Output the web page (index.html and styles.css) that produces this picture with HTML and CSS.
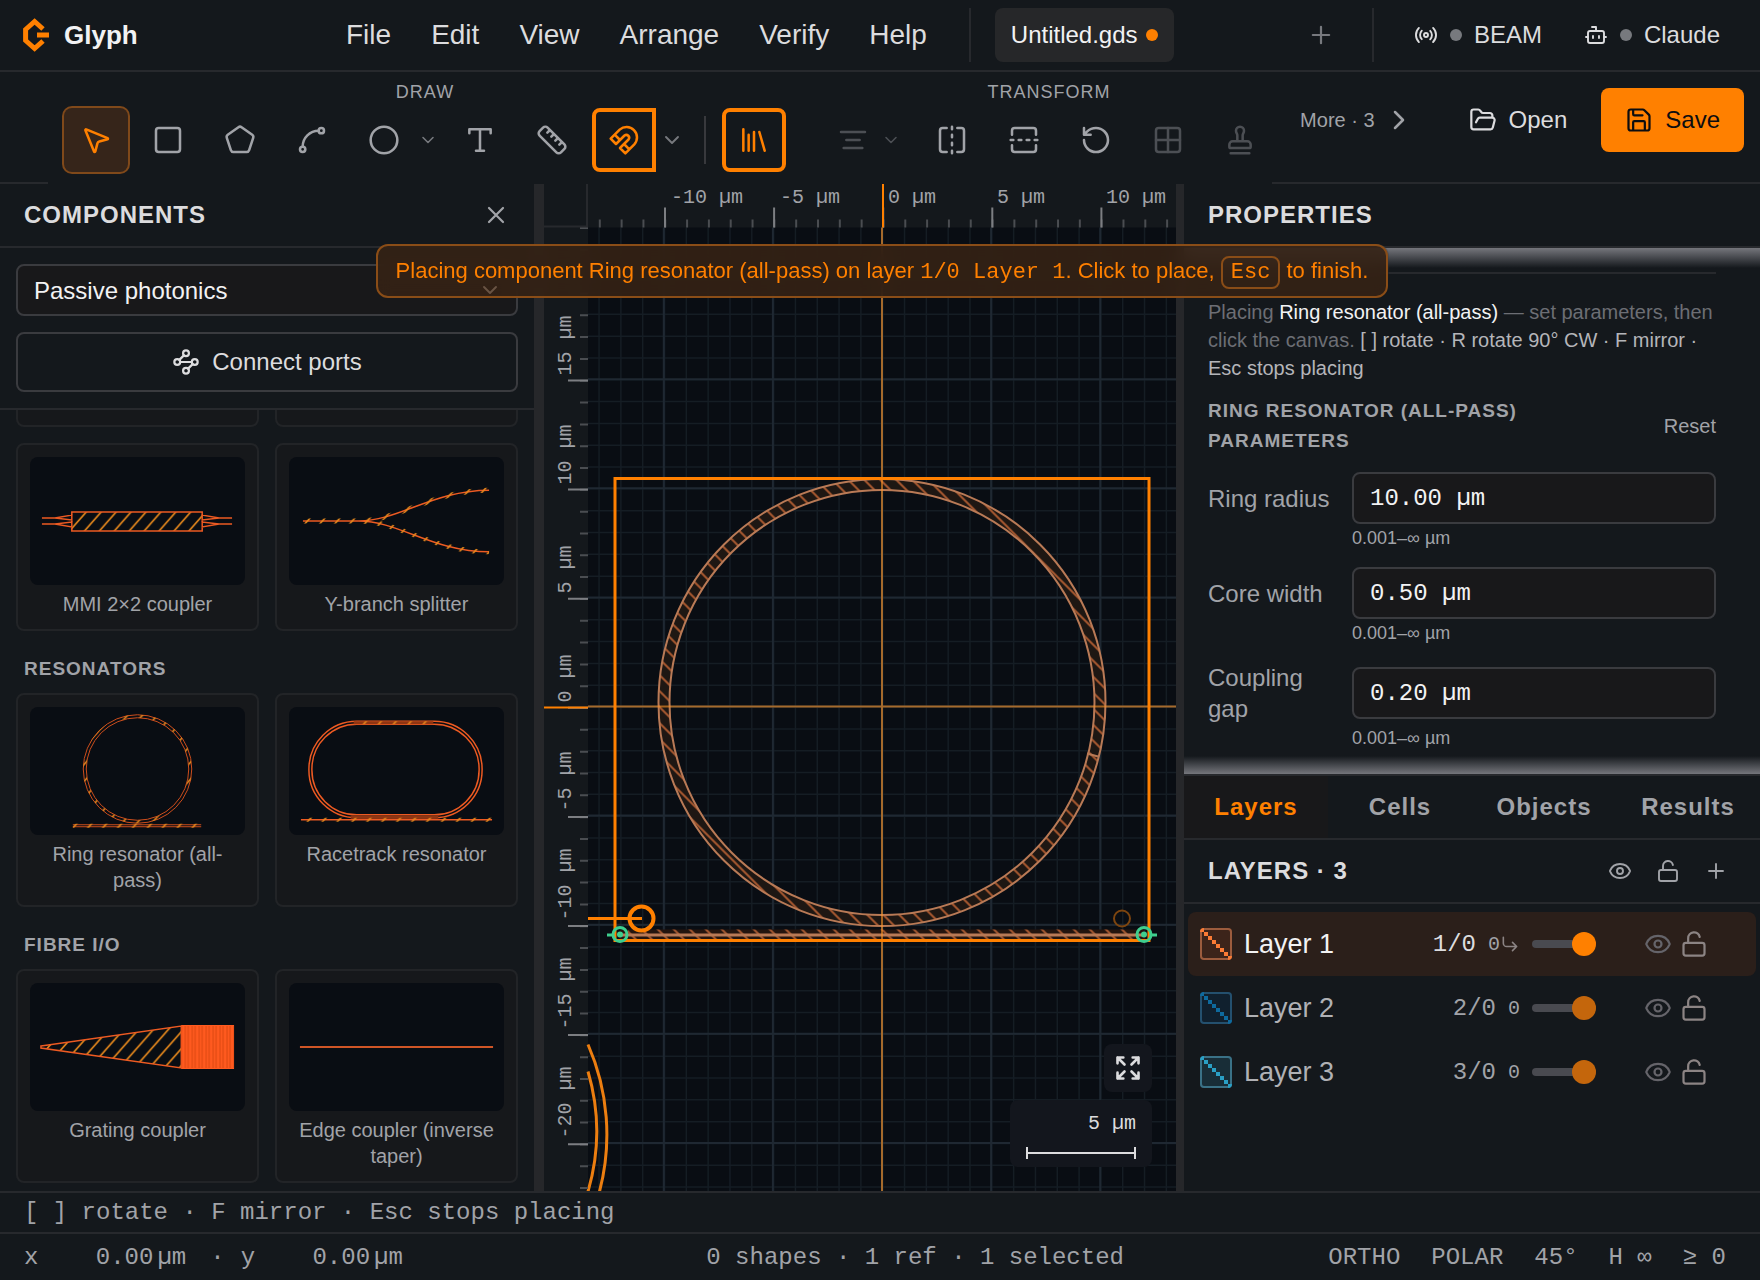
FILE: index.html
```html
<!DOCTYPE html>
<html lang="en">
<head>
    <meta charset="UTF-8">
    <meta name="viewport" content="width=device-width, initial-scale=1.0">
    <title>Glyph - Untitled.gds</title>
    <link rel="stylesheet" href="styles.css">
</head>
<body>
    <!-- Icon sprite -->
    <svg class="sprite" aria-hidden="true">
        <symbol id="i-pointer" viewBox="0 0 24 24"><path d="M4.037 4.688a.495.495 0 0 1 .651-.651l16 6.5a.5.5 0 0 1-.063.947l-6.124 1.58a2 2 0 0 0-1.438 1.435l-1.579 6.126a.5.5 0 0 1-.947.063z"/></symbol>
        <symbol id="i-square" viewBox="0 0 24 24"><rect x="3" y="3" width="18" height="18" rx="2"/></symbol>
        <symbol id="i-pentagon" viewBox="0 0 24 24"><path d="M10.83 2.38a2 2 0 0 1 2.34 0l8 5.74a2 2 0 0 1 .73 2.25l-3.04 9.26a2 2 0 0 1-1.9 1.37H7.04a2 2 0 0 1-1.9-1.37L2.1 10.37a2 2 0 0 1 .73-2.25z"/></symbol>
        <symbol id="i-spline" viewBox="0 0 24 24"><circle cx="19" cy="5" r="2"/><circle cx="5" cy="19" r="2"/><path d="M5 17A12 12 0 0 1 17 5"/></symbol>
        <symbol id="i-circle" viewBox="0 0 24 24"><circle cx="12" cy="12" r="10"/></symbol>
        <symbol id="i-down" viewBox="0 0 24 24"><path d="m6 9 6 6 6-6"/></symbol>
        <symbol id="i-right" viewBox="0 0 24 24"><path d="m9 18 6-6-6-6"/></symbol>
        <symbol id="i-type" viewBox="0 0 24 24"><path d="M4 7V4h16v3M9 20h6M12 4v16"/></symbol>
        <symbol id="i-ruler" viewBox="0 0 24 24"><path d="M21.3 15.3a2.4 2.4 0 0 1 0 3.4l-2.6 2.6a2.4 2.4 0 0 1-3.4 0L2.7 8.7a2.41 2.41 0 0 1 0-3.4l2.6-2.6a2.41 2.41 0 0 1 3.4 0ZM14.5 12.5l2-2M11.5 9.5l2-2M8.5 6.5l2-2M17.5 15.5l2-2"/></symbol>
        <symbol id="i-magnet" viewBox="0 0 24 24"><path d="m6 15-4-4 6.75-6.77a7.79 7.79 0 0 1 11 11L13 22l-4-4 6.39-6.36a2.14 2.14 0 0 0-3-3L6 15M5 8l4 4M12 15l4 4"/></symbol>
        <symbol id="i-library" viewBox="0 0 24 24"><path d="m16 6 4 14M12 6v14M8 8v12M4 4v16"/></symbol>
        <symbol id="i-align" viewBox="0 0 24 24"><path d="M21 6H3M17 12H7M19 18H5"/></symbol>
        <symbol id="i-flip-h" viewBox="0 0 24 24"><path d="M8 3H5a2 2 0 0 0-2 2v14c0 1.1.9 2 2 2h3M16 3h3a2 2 0 0 1 2 2v14a2 2 0 0 1-2 2h-3M12 20v2M12 14v2M12 8v2M12 2v2"/></symbol>
        <symbol id="i-flip-v" viewBox="0 0 24 24"><path d="M21 8V5a2 2 0 0 0-2-2H5a2 2 0 0 0-2 2v3M21 16v3a2 2 0 0 1-2 2H5a2 2 0 0 1-2-2v-3M4 12H2M10 12H8M16 12h-2M22 12h-2"/></symbol>
        <symbol id="i-rotate" viewBox="0 0 24 24"><path d="M3 12a9 9 0 1 0 9-9 9.75 9.75 0 0 0-6.74 2.74L3 8M3 3v5h5"/></symbol>
        <symbol id="i-grid" viewBox="0 0 24 24"><rect x="3" y="3" width="18" height="18" rx="2"/><path d="M12 3v18M3 12h18"/></symbol>
        <symbol id="i-stamp" viewBox="0 0 24 24"><path d="M14 13V8.5C14 7 15 7 15 5a3 3 0 0 0-6 0c0 2 1 2 1 3.5V13M20 15.5a2.5 2.5 0 0 0-2.5-2.5h-11A2.5 2.5 0 0 0 4 15.5V17a1 1 0 0 0 1 1h14a1 1 0 0 0 1-1zM5 22h14"/></symbol>
        <symbol id="i-folder" viewBox="0 0 24 24"><path d="m6 14 1.5-2.9A2 2 0 0 1 9.24 10H20a2 2 0 0 1 1.94 2.5l-1.54 6a2 2 0 0 1-1.95 1.5H4a2 2 0 0 1-2-2V5a2 2 0 0 1 2-2h3.9a2 2 0 0 1 1.69.9l.81 1.2a2 2 0 0 0 1.67.9H18a2 2 0 0 1 2 2v2"/></symbol>
        <symbol id="i-save" viewBox="0 0 24 24"><path d="M15.2 3a2 2 0 0 1 1.4.6l3.8 3.8a2 2 0 0 1 .6 1.4V19a2 2 0 0 1-2 2H5a2 2 0 0 1-2-2V5a2 2 0 0 1 2-2zM17 21v-7a1 1 0 0 0-1-1H8a1 1 0 0 0-1 1v7M7 3v4a1 1 0 0 0 1 1h7"/></symbol>
        <symbol id="i-radio" viewBox="0 0 24 24"><path d="M4.9 19.1C1 15.2 1 8.8 4.9 4.9M7.8 16.2c-2.3-2.3-2.3-6.1 0-8.5M16.2 7.8c2.3 2.3 2.3 6.1 0 8.5M19.1 4.9C23 8.8 23 15.1 19.1 19"/><circle cx="12" cy="12" r="2"/></symbol>
        <symbol id="i-bot" viewBox="0 0 24 24"><rect x="4" y="8" width="16" height="12" rx="2"/><path d="M12 8V4H8M2 14h2M20 14h2M15 13v2M9 13v2"/></symbol>
        <symbol id="i-ports" viewBox="0 0 24 24"><circle cx="12" cy="4.5" r="2.5"/><path d="m10.2 6.3-3.9 3.9M7 12h10M13.8 17.7l3.9-3.9"/><circle cx="4.5" cy="12" r="2.5"/><circle cx="19.5" cy="12" r="2.5"/><circle cx="12" cy="19.5" r="2.5"/></symbol>
        <symbol id="i-x" viewBox="0 0 24 24"><path d="M18 6 6 18M6 6l12 12"/></symbol>
        <symbol id="i-plus" viewBox="0 0 24 24"><path d="M5 12h14M12 5v14"/></symbol>
        <symbol id="i-eye" viewBox="0 0 24 24"><path d="M2.062 12.348a1 1 0 0 1 0-.696 10.75 10.75 0 0 1 19.876 0 1 1 0 0 1 0 .696 10.75 10.75 0 0 1-19.876 0"/><circle cx="12" cy="12" r="3"/></symbol>
        <symbol id="i-unlock" viewBox="0 0 24 24"><rect x="3" y="11" width="18" height="11" rx="2"/><path d="M7 11V7a5 5 0 0 1 9.9-1"/></symbol>
        <symbol id="i-corner" viewBox="0 0 24 24"><path d="m15 10 5 5-5 5M4 4v7a4 4 0 0 0 4 4h12"/></symbol>
        <symbol id="i-expand" viewBox="0 0 24 24"><path d="m15 15 6 6M15 9l6-6M21 16v5h-5M21 8V3h-5M3 16v5h5M3 21l6-6M3 8V3h5M9 9 3 3"/></symbol>
        <symbol id="i-swatch" viewBox="0 0 32 32"><path d="M0 0h4v4h4v4h4v4h4v4h4v4h4v4h4v4h4v4h-4v-4h-4v-4h-4v-4h-4v-4h-4v-4H8V8H4V4H0z"/></symbol>
        <defs>
            <pattern id="hatch-up" width="15" height="17" patternUnits="userSpaceOnUse"><path d="M-3 20.4 18-3.4M-3 3.4 3-3.4M12 20.4l6-6.8" stroke="#e8891c" stroke-width="1.6"/></pattern>
            <pattern id="hatch-ring" width="16" height="16" patternUnits="userSpaceOnUse"><path d="M-4-4 20 20M12-4l8 8M-4 12l8 8" stroke="#a5572f" stroke-width="2"/></pattern>
            <pattern id="teeth" width="7" height="8" patternUnits="userSpaceOnUse"><path d="M2 0v8M5 0v8" stroke="#d9460f"/></pattern>
        </defs>
    </svg>

    <header class="menubar">
        <div class="brand">
            <svg class="logo" viewBox="0 0 26 34"><path d="m20 11-8.4-7.5-9 8v11l9 8 8.4-7.5M14 17h12" /></svg>
            Glyph
        </div>
        <nav class="menus">
            <button type="button">File</button>
            <button type="button">Edit</button>
            <button type="button">View</button>
            <button type="button">Arrange</button>
            <button type="button">Verify</button>
            <button type="button">Help</button>
        </nav>
        <div class="docs">
            <button type="button" class="doc">Untitled.gds<span class="dot unsaved"></span></button>
            <button type="button" class="new-doc" aria-label="New document"><svg class="icon icon-md"><use href="#i-plus"/></svg></button>
        </div>
        <div class="links">
            <button type="button"><svg class="icon icon-sm"><use href="#i-radio"/></svg><span class="dot"></span>BEAM</button>
            <button type="button"><svg class="icon icon-sm"><use href="#i-bot"/></svg><span class="dot"></span>Claude</button>
        </div>
    </header>

    <div class="toolbar">
        <div class="toolbar-edge"></div>
        <div class="tools">
            <div class="tool-group">
                <span class="group-label">DRAW</span>
                <div class="tool-row">
                    <button type="button" class="tool selected" aria-label="Select"><svg class="icon"><use href="#i-pointer"/></svg></button>
                    <button type="button" class="tool" aria-label="Rectangle"><svg class="icon"><use href="#i-square"/></svg></button>
                    <button type="button" class="tool" aria-label="Polygon"><svg class="icon"><use href="#i-pentagon"/></svg></button>
                    <button type="button" class="tool" aria-label="Path"><svg class="icon"><use href="#i-spline"/></svg></button>
                    <div class="split">
                        <button type="button" class="tool" aria-label="Circle"><svg class="icon"><use href="#i-circle"/></svg></button>
                        <button type="button" class="caret" aria-label="More circles"><svg class="icon icon-xs"><use href="#i-down"/></svg></button>
                    </div>
                    <button type="button" class="tool" aria-label="Text"><svg class="icon"><use href="#i-type"/></svg></button>
                    <button type="button" class="tool" aria-label="Measure"><svg class="icon"><use href="#i-ruler"/></svg></button>
                    <div class="split">
                        <button type="button" class="tool on on-left" aria-label="Snap"><svg class="icon"><use href="#i-magnet"/></svg></button>
                        <button type="button" class="caret caret-wide" aria-label="Snap options"><svg class="icon icon-sm"><use href="#i-down"/></svg></button>
                    </div>
                    <span class="rule"></span>
                    <button type="button" class="tool on" aria-label="Component library"><svg class="icon"><use href="#i-library"/></svg></button>
                </div>
            </div>
            <div class="tool-group">
                <span class="group-label">TRANSFORM</span>
                <div class="tool-row">
                    <button type="button" class="tool align" disabled aria-label="Align"><svg class="icon"><use href="#i-align"/></svg><svg class="icon icon-xs"><use href="#i-down"/></svg></button>
                    <button type="button" class="tool" aria-label="Flip horizontal"><svg class="icon"><use href="#i-flip-h"/></svg></button>
                    <button type="button" class="tool" aria-label="Flip vertical"><svg class="icon"><use href="#i-flip-v"/></svg></button>
                    <button type="button" class="tool" aria-label="Rotate"><svg class="icon"><use href="#i-rotate"/></svg></button>
                    <button type="button" class="tool" disabled aria-label="Array"><svg class="icon"><use href="#i-grid"/></svg></button>
                    <button type="button" class="tool" disabled aria-label="Stamp"><svg class="icon"><use href="#i-stamp"/></svg></button>
                </div>
            </div>
        </div>
        <div class="actions">
            <button type="button" class="more">More · 3<svg class="icon"><use href="#i-right"/></svg></button>
            <button type="button" class="open"><svg class="icon icon-md"><use href="#i-folder"/></svg>Open</button>
            <button type="button" class="save"><svg class="icon icon-md"><use href="#i-save"/></svg>Save</button>
        </div>
    </div>

    <main class="workspace">
        <aside class="components">
            <div class="panel-head">
                <h2>COMPONENTS</h2>
                <button type="button" aria-label="Close"><svg class="icon icon-md"><use href="#i-x"/></svg></button>
            </div>
            <div class="library-controls">
                <div class="select-wrap">
                    <select aria-label="Library">
                        <option>Passive photonics</option>
                    </select>
                    <svg class="icon icon-sm"><use href="#i-down"/></svg>
                </div>
                <button type="button" class="connect"><svg class="icon icon-md"><use href="#i-ports"/></svg>Connect ports</button>
            </div>
            <div class="library">
                <div class="cards">
                    <div class="card stub"></div>
                    <div class="card stub"></div>
                    <button type="button" class="card">
                        <svg class="thumb" viewBox="0 0 216 128">
                            <rect x="42" y="55" width="131" height="19" fill="url(#hatch-up)"/>
                            <path class="outline" d="M42 55h131v19H42zM12 61h13l17-3v5L25 61M12 67h13l17-2v5L25 67M203 61h-13l-17-3v5l17-2M203 67h-13l-17-2v5l17-3"/>
                        </svg>
                        MMI 2×2 coupler
                    </button>
                    <button type="button" class="card">
                        <svg class="thumb" viewBox="0 0 216 128">
                            <path class="outline" d="M14 64h56c40 0 75-31 131-31M70 64c40 0 75 31 131 31"/>
                            <path stroke="url(#hatch-up)" stroke-width="5" fill="none" d="M14 64h56c40 0 75-31 131-31M70 64c40 0 75 31 131 31"/>
                        </svg>
                        Y-branch splitter
                    </button>
                </div>
                <h3>RESONATORS</h3>
                <div class="cards">
                    <button type="button" class="card">
                        <svg class="thumb" viewBox="0 0 216 128">
                            <circle class="thin" cx="108" cy="62" r="54.5"/>
                            <circle class="thin" cx="108" cy="62" r="51.5"/>
                            <circle cx="108" cy="62" r="53" fill="none" stroke="url(#hatch-up)" stroke-width="3"/>
                            <path class="thin" d="M43 118h129M43 120h129"/>
                            <path fill="url(#hatch-up)" d="M43 117h129v4H43z"/>
                        </svg>
                        Ring resonator (all-pass)
                    </button>
                    <button type="button" class="card">
                        <svg class="thumb" viewBox="0 0 216 128">
                            <rect class="outline" x="20" y="14" width="174" height="97" rx="48"/>
                            <rect class="outline" x="23" y="17" width="168" height="91" rx="45"/>
                            <path stroke="#8f3512" stroke-width="3" d="M65 15.5h80M62 110.5h88"/>
                            <path class="outline" d="M12 113h192"/>
                            <path fill="url(#hatch-up)" d="M12 111h192v4H12zM65 14h80v3H65z"/>
                        </svg>
                        Racetrack resonator
                    </button>
                </div>
                <h3>FIBRE I/O</h3>
                <div class="cards">
                    <button type="button" class="card">
                        <svg class="thumb" viewBox="0 0 216 128">
                            <path fill="url(#hatch-up)" d="M11 63 152 43v42L11 65z"/>
                            <path class="outline" d="M11 63 152 43v42L11 65z"/>
                            <path fill="#ff5a1f" d="M152 42h53v44h-53z"/>
                            <path fill="url(#teeth)" d="M152 43h53v42h-53z"/>
                        </svg>
                        Grating coupler
                    </button>
                    <button type="button" class="card">
                        <svg class="thumb" viewBox="0 0 216 128"><path stroke="#cf5526" stroke-width="2" d="M11 64h194"/></svg>
                        Edge coupler (inverse taper)
                    </button>
                </div>
            </div>
        </aside>
        <div class="handle"></div>

        <section class="canvas">
            <svg class="drawing" viewBox="544 184 632 1008" preserveAspectRatio="xMidYMid slice">
                <rect x="544" y="184" width="632" height="1008" fill="#14181c"/>
                <rect x="588" y="228" width="588" height="964" fill="#090d13"/>

                <!-- grid: wide dashed strokes, one dash per line -->
                <g stroke="#151d24" stroke-dasharray="1.5 20.32">
                    <path d="M598.3 710h577.7" stroke-width="964"/>
                    <path d="M882 248.6V1192" stroke-width="588"/>
                </g>
                <g stroke="#1f2832" stroke-dasharray="2 107.1">
                    <path d="M662.8 710H1176" stroke-width="964"/>
                    <path d="M882 269.6V1192" stroke-width="588"/>
                </g>

                <!-- placed reference -->
                <path d="M588 919h54" stroke="#ff8000" stroke-width="3"/>
                <g class="ghost">
                    <circle cx="882" cy="703" r="218" stroke="#1e1713" stroke-width="11"/>
                    <circle cx="882" cy="703" r="218" stroke="url(#hatch-ring)" stroke-width="11"/>
                    <circle cx="882" cy="703" r="223.5"/>
                    <circle cx="882" cy="703" r="212.5"/>
                    <path d="m1087 754 11 3"/>
                    <path d="M620 930h524v10H620z" fill="#24150f" stroke="none"/>
                    <path d="M628 930h508v10H628z" fill="url(#hatch-ring)" stroke="none"/>
                    <path d="M620 935.5h524" stroke-width="3"/>
                </g>
                <path d="M882 228v964M588 707h588" stroke="#ff9628" stroke-opacity=".6" stroke-width="2"/>
                <rect x="615" y="479" width="534" height="462" fill="none" stroke="#ff8000" stroke-width="3"/>
                <circle cx="641.5" cy="919" r="12" fill="none" stroke="#ff8000" stroke-width="4"/>
                <circle cx="1122" cy="919" r="8" fill="none" stroke="#7d450f" stroke-width="2"/>
                <g fill="none" stroke="#3ecf8e" stroke-width="3">
                    <circle cx="620" cy="935" r="7"/>
                    <circle cx="1144" cy="935" r="7"/>
                    <path d="M607 935.5h6M1151 935.5h6"/>
                </g>
                <circle cx="620" cy="935" r="3" fill="#3ecf8e"/>
                <circle cx="1144" cy="935" r="3" fill="#3ecf8e"/>
                <path d="M588 1045A224 224 0 0 1 599.5 1192M588 1072A213 213 0 0 1 588 1192" fill="none" stroke="#ec7e10" stroke-width="3"/>

                <!-- rulers -->
                <g stroke="#4a4d51">
                    <path d="M598.8 224H1176" stroke-width="8" stroke-dasharray="2 19.82"/>
                    <path d="M584 227.5V1192" stroke-width="8" stroke-dasharray="2 19.82"/>
                </g>
                <g stroke="#7c7e82">
                    <path d="M664 218h512" stroke-width="20" stroke-dasharray="2 107.1"/>
                    <path d="M578 380v812" stroke-width="20" stroke-dasharray="2 107.1"/>
                </g>
                <path d="M587 184v44M544 227h44" stroke="#27292d" stroke-width="2"/>
                <path d="M883 184v44M544 708h44" stroke="#ff8000" stroke-width="2"/>
                <g class="ruler-text">
                    <text x="671" y="203">-10 µm</text>
                    <text x="780" y="203">-5 µm</text>
                    <text x="888" y="203">0 µm</text>
                    <text x="997" y="203">5 µm</text>
                    <text x="1106" y="203">10 µm</text>
                    <text transform="translate(571 376) rotate(-90)">15 µm</text>
                    <text transform="translate(571 485) rotate(-90)">10 µm</text>
                    <text transform="translate(571 594) rotate(-90)">5 µm</text>
                    <text transform="translate(571 703) rotate(-90)">0 µm</text>
                    <text transform="translate(571 812) rotate(-90)">-5 µm</text>
                    <text transform="translate(571 921) rotate(-90)">-10 µm</text>
                    <text transform="translate(571 1030) rotate(-90)">-15 µm</text>
                    <text transform="translate(571 1139) rotate(-90)">-20 µm</text>
                </g>
            </svg>
            <div class="overlay">
                <button type="button" class="fit" aria-label="Zoom to fit"><svg class="icon icon-md"><use href="#i-expand"/></svg></button>
                <div class="scale">5 µm<span class="scale-bar"></span></div>
            </div>
            <div class="banner-wrap">
                <div class="banner" role="status">Placing component Ring resonator (all-pass) on layer <code>1/0 Layer 1</code>. Click to place, <kbd>Esc</kbd> to finish.</div>
            </div>
        </section>
        <div class="handle handle-right"></div>

        <aside class="inspector">
            <div class="panel-head"><h2>PROPERTIES</h2></div>
            <div class="properties">
                <hr>
                <p>Placing <strong>Ring resonator (all-pass)</strong> — set parameters, then click the canvas. <span>[ ] rotate · R rotate 90° CW · F mirror · Esc stops placing</span></p>
                <div class="param-head">
                    <h3>RING RESONATOR (ALL-PASS) PARAMETERS</h3>
                    <button type="button">Reset</button>
                </div>
                <div class="params">
                    <label for="radius">Ring radius</label>
                    <input type="text" id="radius" value="10.00 µm">
                    <small>0.001–∞ µm</small>
                    <label for="core">Core width</label>
                    <input type="text" id="core" value="0.50 µm">
                    <small>0.001–∞ µm</small>
                    <label for="gap">Coupling gap</label>
                    <input type="text" id="gap" value="0.20 µm">
                    <small>0.001–∞ µm</small>
                </div>
            </div>
            <div class="tabs" role="tablist">
                <button type="button" role="tab" class="active">Layers</button>
                <button type="button" role="tab">Cells</button>
                <button type="button" role="tab">Objects</button>
                <button type="button" role="tab">Results</button>
            </div>
            <div class="panel-head layers-head">
                <h2>LAYERS · 3</h2>
                <button type="button" aria-label="Toggle all"><svg class="icon icon-sm"><use href="#i-eye"/></svg></button>
                <button type="button" aria-label="Lock all"><svg class="icon icon-sm"><use href="#i-unlock"/></svg></button>
                <button type="button" aria-label="Add layer"><svg class="icon icon-sm"><use href="#i-plus"/></svg></button>
            </div>
            <ul class="layers">
                <li class="layer active">
                    <svg class="swatch orange"><use href="#i-swatch"/></svg>
                    <span class="name">Layer 1</span>
                    <span class="gds">1/0</span>
                    <span class="count">0<svg class="icon icon-xs"><use href="#i-corner"/></svg></span>
                    <input type="range" value="100" aria-label="Layer 1 opacity">
                    <button type="button" aria-label="Hide Layer 1"><svg class="icon icon-md eye"><use href="#i-eye"/></svg></button>
                    <button type="button" aria-label="Lock Layer 1"><svg class="icon icon-md"><use href="#i-unlock"/></svg></button>
                </li>
                <li class="layer">
                    <svg class="swatch blue"><use href="#i-swatch"/></svg>
                    <span class="name">Layer 2</span>
                    <span class="gds">2/0</span>
                    <span class="count">0</span>
                    <input type="range" value="100" aria-label="Layer 2 opacity">
                    <button type="button" aria-label="Hide Layer 2"><svg class="icon icon-md eye"><use href="#i-eye"/></svg></button>
                    <button type="button" aria-label="Lock Layer 2"><svg class="icon icon-md"><use href="#i-unlock"/></svg></button>
                </li>
                <li class="layer">
                    <svg class="swatch cyan"><use href="#i-swatch"/></svg>
                    <span class="name">Layer 3</span>
                    <span class="gds">3/0</span>
                    <span class="count">0</span>
                    <input type="range" value="100" aria-label="Layer 3 opacity">
                    <button type="button" aria-label="Hide Layer 3"><svg class="icon icon-md eye"><use href="#i-eye"/></svg></button>
                    <button type="button" aria-label="Lock Layer 3"><svg class="icon icon-md"><use href="#i-unlock"/></svg></button>
                </li>
            </ul>
        </aside>
    </main>

    <div class="hint">[ ] rotate · F mirror · Esc stops placing</div>
    <footer class="status">
        <div class="coords">
            <span>x</span><span class="value">0.00</span><span class="unit">µm</span>
            <span class="sep">·</span>
            <span>y</span><span class="value">0.00</span><span class="unit">µm</span>
        </div>
        <span>0 shapes · 1 ref · 1 selected</span>
        <div class="modes">
            <button type="button">ORTHO</button>
            <button type="button">POLAR</button>
            <button type="button">45°</button>
            <button type="button">H ∞</button>
            <button type="button">≥ 0</button>
        </div>
    </footer>
</body>
</html>
```
FILE: styles.css
```css
* {
    box-sizing: border-box;
}
body {
    margin: 0;
    height: 100vh;
    display: flex;
    flex-direction: column;
    overflow: hidden;
    background: #14181c;
    color: #a1a3a8;
    font-family: "Liberation Sans", Arial, sans-serif;
    font-size: 24px;
}
button {
    padding: 0;
    border: none;
    background: none;
    color: inherit;
    font: inherit;
    cursor: pointer;
}
h2, h3, p, ul {
    margin: 0;
    padding: 0;
}
h2 {
    font-size: 24px;
    letter-spacing: 1px;
    color: #dcdcde;
}
h3 {
    font-size: 19px;
    letter-spacing: 1px;
    color: #a1a3a8;
}
.sprite {
    position: absolute;
    width: 0;
    height: 0;
}
.icon {
    display: block;
    flex: none;
    width: 32px;
    height: 32px;
    fill: none;
    stroke: currentColor;
    stroke-width: 1.9;
    stroke-linecap: round;
    stroke-linejoin: round;
}
.icon-md {
    width: 28px;
    height: 28px;
}
.icon-sm {
    width: 24px;
    height: 24px;
}
.icon-xs {
    width: 20px;
    height: 20px;
}

/* Menu bar */
.menubar {
    display: flex;
    align-items: center;
    height: 72px;
    flex: none;
    border-bottom: 2px solid #27292d;
    color: #dcdcde;
}
.brand {
    display: flex;
    align-items: center;
    gap: 15px;
    width: 346px;
    padding-left: 23px;
    font-size: 26px;
    font-weight: bold;
    color: #f2f2f3;
}
.logo {
    width: 26px;
    height: 34px;
    fill: none;
    stroke: #ff8000;
    stroke-width: 5;
}
.menus {
    display: flex;
    gap: 40px;
    padding-right: 42px;
    font-size: 28px;
}
.docs {
    flex: 1;
    display: flex;
    align-items: center;
    justify-content: space-between;
    height: 54px;
    padding: 0 37px 0 24px;
    border-left: 2px solid #27292d;
    border-right: 2px solid #27292d;
}
.doc {
    display: flex;
    align-items: center;
    gap: 8px;
    height: 54px;
    padding: 0 16px;
    border-radius: 8px;
    background: #262729;
    color: #f2f2f3;
}
.new-doc {
    color: #77797e;
}
.dot {
    width: 12px;
    height: 12px;
    border-radius: 50%;
    background: #77797e;
}
.unsaved {
    background: #ff8000;
}
.links {
    display: flex;
    gap: 42px;
    padding: 0 40px;
}
.links button {
    display: flex;
    align-items: center;
    gap: 12px;
}

/* Toolbar */
.toolbar {
    display: flex;
    height: 112px;
    flex: none;
}
.toolbar-edge {
    width: 48px;
    border-bottom: 2px solid #27292d;
}
.tools {
    display: flex;
    gap: 40px;
    padding: 8px 0 0 16px;
}
.tool-group {
    display: flex;
    flex-direction: column;
    align-items: center;
    gap: 4px;
}
.group-label {
    font-size: 18px;
    line-height: 24px;
    letter-spacing: 1px;
}
.tool-row {
    display: flex;
    align-items: center;
    gap: 8px;
}
.split {
    display: flex;
    align-items: center;
}
.tool {
    display: flex;
    align-items: center;
    justify-content: center;
    width: 64px;
    height: 64px;
    border-radius: 8px;
}
.tool:disabled {
    color: #4c4f54;
}
.selected {
    background: #36251a;
    box-shadow: 0 0 0 2px #80491a;
    color: #ff8000;
}
.on {
    border: 4px solid #ff8000;
    color: #ff8000;
}
.on-left {
    border-radius: 8px 0 0 8px;
}
.align {
    width: 86px;
    gap: 12px;
}
.caret {
    display: flex;
    justify-content: center;
    width: 24px;
    color: #77797e;
}
.caret-wide {
    width: 32px;
}
.rule {
    width: 2px;
    height: 48px;
    margin: 0 8px;
    background: #38393d;
}
.actions {
    flex: 1;
    display: flex;
    align-items: flex-start;
    justify-content: flex-end;
    gap: 10px;
    padding: 16px 16px 0 0;
    border-bottom: 2px solid #27292d;
    color: #dcdcde;
}
.actions button {
    display: flex;
    align-items: center;
    gap: 12px;
    height: 64px;
    padding: 0 24px;
    border-radius: 8px;
}
.actions .more {
    gap: 8px;
    padding: 0 20px 0 0;
    font-size: 20px;
    color: #a1a3a8;
}
.actions .save {
    background: #ff8000;
    color: #0c0d10;
}

/* Workspace */
.workspace {
    flex: 1;
    min-height: 0;
    display: flex;
}
.handle {
    flex: none;
    width: 10px;
    background: #26272a;
}
.handle-right {
    width: 8px;
}
.panel-head {
    flex: none;
    display: flex;
    align-items: center;
    justify-content: space-between;
    height: 64px;
    padding: 0 24px;
    border-bottom: 2px solid #27292d;
}

/* Components */
.components {
    display: flex;
    flex-direction: column;
    flex: none;
    width: 534px;
}
.library-controls {
    display: flex;
    flex-direction: column;
    gap: 16px;
    padding: 16px;
    border-bottom: 2px solid #27292d;
}
.select-wrap {
    display: grid;
    align-items: center;
}
.select-wrap select {
    grid-area: 1 / 1;
    appearance: none;
    width: 100%;
    height: 52px;
    padding: 0 16px;
    border: 2px solid #3a3b3f;
    border-radius: 8px;
    background: #18181a;
    color: #f2f2f3;
    font: inherit;
}
.select-wrap .icon {
    grid-area: 1 / 1;
    justify-self: end;
    margin-right: 16px;
    position: relative;
    z-index: 6;
    color: #6a5444;
}
.connect {
    display: flex;
    align-items: center;
    justify-content: center;
    gap: 12px;
    height: 60px;
    border: 2px solid #3a3b3f;
    border-radius: 8px;
    color: #dcdcde;
}
.library {
    flex: 1;
    min-height: 0;
    display: flex;
    flex-direction: column;
    justify-content: flex-end;
    overflow: hidden;
    padding: 0 16px 8px;
}
.library h3 {
    padding: 26px 8px 12px;
    line-height: 24px;
}
.cards {
    display: grid;
    grid-template-columns: 1fr 1fr;
    gap: 16px;
}
.card {
    display: flex;
    flex-direction: column;
    align-items: center;
    gap: 6px;
    padding: 12px;
    border: 2px solid #222427;
    border-radius: 8px;
    background: #16181b;
    font-size: 20px;
    line-height: 26px;
}
.stub {
    height: 48px;
}
.thumb {
    flex: none;
    width: 100%;
    height: 128px;
    border-radius: 8px;
    background: #090d13;
}
.outline {
    fill: none;
    stroke: #ec5a22;
    stroke-width: 1.5;
}
.thin {
    fill: none;
    stroke: #cf4f1d;
    stroke-width: 1;
}

/* Canvas */
.canvas {
    position: relative;
    flex: 1;
    min-width: 0;
}
.drawing {
    display: block;
    width: 100%;
    height: 100%;
}
.ghost {
    fill: none;
    stroke: #b97a56;
    stroke-width: 2;
}
.ruler-text {
    fill: #a1a3a8;
    font-family: "Liberation Mono", monospace;
    font-size: 20px;
}
.overlay {
    position: absolute;
    right: 24px;
    bottom: 24px;
    display: flex;
    flex-direction: column;
    align-items: flex-end;
    gap: 8px;
    color: #dcdcde;
}
.fit {
    display: flex;
    align-items: center;
    justify-content: center;
    width: 48px;
    height: 48px;
    border-radius: 8px;
    background: #13161d;
}
.fit .icon {
    stroke-width: 2.25;
}
.scale {
    display: flex;
    flex-direction: column;
    align-items: flex-end;
    gap: 11px;
    padding: 12px 16px 8px;
    border-radius: 8px;
    background: #13161d;
    font-family: "Liberation Mono", monospace;
    font-size: 20px;
    line-height: 24px;
}
.scale-bar {
    width: 110px;
    height: 12px;
    border: solid #dcdcde;
    border-width: 0 2px;
    background: linear-gradient(#dcdcde, #dcdcde) center / 100% 2px no-repeat;
}
.banner-wrap {
    position: absolute;
    top: 60px;
    left: 44px;
    right: 0;
    z-index: 5;
    display: flex;
    justify-content: center;
}
.banner {
    flex: none;
    height: 54px;
    padding: 0 18px;
    border: 2px solid #8a4d17;
    border-radius: 12px;
    background: rgba(54, 34, 20, 0.88);
    backdrop-filter: blur(8px);
    color: #ff8000;
    font-size: 22px;
    line-height: 50px;
    white-space: nowrap;
}
code, kbd {
    font-family: "Liberation Mono", monospace;
    font-size: 22px;
}
kbd {
    padding: 2px 8px;
    border: 2px solid #8a4d17;
    border-radius: 8px;
}

/* Inspector */
.inspector {
    flex: none;
    width: 576px;
    display: flex;
    flex-direction: column;
}
.properties {
    padding: 24px 44px 22px 24px;
    border-bottom: 2px solid #27292d;
    background:
        linear-gradient(#75767c, transparent) top / 100% 20px no-repeat,
        linear-gradient(transparent, #75767c) bottom / 100% 18px no-repeat;
}
.properties hr {
    height: 2px;
    margin: 0 0 24px;
    border: none;
    background: #27292d;
}
.properties p {
    margin-bottom: 14px;
    font-size: 20px;
    line-height: 28px;
    color: #6c6e74;
}
.properties strong {
    font-weight: normal;
    color: #f2f2f3;
}
.properties span {
    color: #b4b5b9;
}
.param-head {
    display: flex;
    align-items: center;
    justify-content: space-between;
    margin-bottom: 16px;
}
.param-head h3 {
    width: 340px;
    line-height: 30px;
}
.param-head button {
    font-size: 20px;
}
.params {
    display: grid;
    grid-template-columns: 128px 1fr;
    column-gap: 16px;
    align-items: center;
}
.params label {
    line-height: 31px;
}
.params input {
    min-width: 0;
    height: 52px;
    padding: 0 16px;
    border: 2px solid #3a3b3f;
    border-radius: 8px;
    background: #18181a;
    color: #f2f2f3;
    font: 24px "Liberation Mono", monospace;
}
.params small {
    grid-column: 2;
    margin-bottom: 15px;
    font-size: 18px;
    line-height: 28px;
}
.params small:last-child {
    margin-bottom: 0;
}
.tabs {
    display: grid;
    grid-template-columns: repeat(4, 1fr);
    height: 64px;
    flex: none;
    border-bottom: 2px solid #27292d;
}
.tabs button {
    font-weight: bold;
    letter-spacing: 1px;
}
.tabs .active {
    background: #18181a;
    color: #ff8000;
}
.layers-head {
    gap: 24px;
    padding-right: 32px;
}
.layers-head h2 {
    flex: 1;
}
.layers {
    padding: 8px 4px;
    list-style: none;
}
.layer {
    display: flex;
    align-items: center;
    height: 64px;
    padding: 0 48px 0 12px;
    border-radius: 8px;
}
.layer.active {
    background: #2b1f1a;
    color: #dcdcde;
}
.swatch {
    width: 32px;
    height: 32px;
    margin-right: 12px;
    border-radius: 4px;
    box-shadow: inset 0 0 0 2px;
}
.orange {
    fill: #f97b35;
    color: #9c5c3d;
    background: #3c241a;
}
.blue {
    fill: #0e6a9e;
    color: #24506e;
    background: #10202e;
}
.cyan {
    fill: #2a9fc4;
    color: #3a7186;
    background: #182d37;
}
.name {
    flex: 1;
    font-size: 27px;
}
.layer:not(.active) .name {
    color: #b0b1b5;
}
.layer.active .name {
    color: #f2f2f3;
}
.gds {
    font-family: "Liberation Mono", monospace;
}
.count {
    display: flex;
    align-items: center;
    margin: 0 12px;
    font-family: "Liberation Mono", monospace;
    font-size: 20px;
    color: #a1a3a8;
}
.layer input {
    appearance: none;
    width: 64px;
    height: 24px;
    margin: 0 48px 0 0;
    background: none;
}
.layer input::-webkit-slider-runnable-track {
    height: 8px;
    border-radius: 4px;
    background: #494a50;
}
.layer input::-webkit-slider-thumb {
    appearance: none;
    width: 24px;
    height: 24px;
    margin-top: -8px;
    border-radius: 50%;
    background: #c4660c;
}
.layer.active input::-webkit-slider-thumb {
    background: #ff8000;
}
.layer button {
    margin-left: 8px;
}
.layer input + button {
    margin-left: 0;
}
.layer .icon {
    color: #8c8484;
}
.layer .eye {
    color: #65646a;
}

/* Status */
.hint, .status {
    flex: none;
    border-top: 2px solid #27292d;
    font-family: "Liberation Mono", monospace;
    white-space: pre;
}
.hint {
    height: 41px;
    padding-left: 24px;
    line-height: 40px;
}
.status {
    display: flex;
    align-items: center;
    justify-content: space-between;
    height: 48px;
    padding: 0 34px 0 24px;
    white-space: nowrap;
}
.coords {
    display: flex;
    align-items: center;
    width: 478px;
}
.value {
    width: 115px;
    text-align: right;
}
.unit {
    margin-left: 4px;
}
.sep {
    margin: 0 16px 0 24px;
}
.modes {
    display: flex;
    gap: 31px;
}
```
